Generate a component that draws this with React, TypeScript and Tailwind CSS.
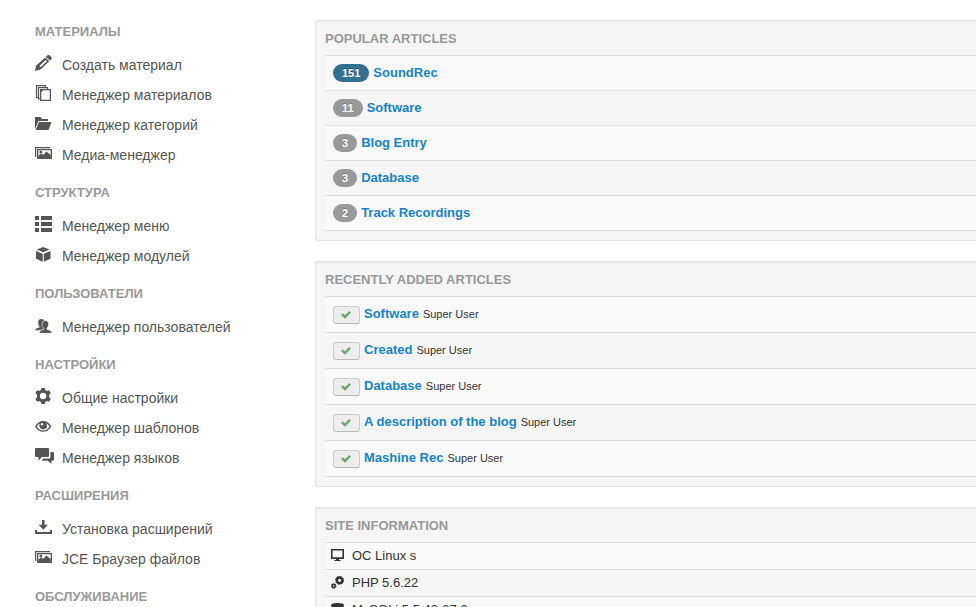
import type { ReactNode } from "react";

const icons: Record<string, ReactNode> = {
  pencil: (
    <>
      <path d="M12 .8 Q13.4 -.6 15.2 .8 Q17.6 2.8 16.2 4.4 L15 5.6 L10.9 1.9 Z" />
      <path fillRule="evenodd" d="M10.2 2.5 L14.3 6.2 L5.4 14.6 L0 16 L1 10.8 Z M10.6 5 L4.4 10.9 L5.7 12.1 L12 6.3 Z" />
    </>
  ),
  stack: (
    <>
      <g fill="none" stroke="currentColor" strokeWidth="1.2">
        <path d="M3 12.5 H1.5 V.6 H10.5 V2" />
        <path d="M5 14 H3.5 V2.6 H12.5 V4" />
      </g>
      <path fill="#fff" stroke="currentColor" strokeWidth="1.3" d="M8 4.6 H15.4 V15.4 H5.6 V7 Z" />
      <path d="M5 4 H9 L5 8 Z" />
    </>
  ),
  folder: (
    <>
      <path d="M0 14 V2 H5.5 L7 4 H13 V6 H3.5 Z" />
      <path d="M4 7 H16.5 L13.5 15 H.6 Z" />
    </>
  ),
  pictures: (
    <>
      <path d="M0 2 H15 V3.2 H1.2 V12 H0 Z" />
      <path fillRule="evenodd" d="M2 4 H17 V14 H2 Z M3.3 5.2 V12.8 H15.7 V5.2 Z" />
      <path d="M3.3 13 V10.6 L5.8 8.8 L8.3 9.8 L11.4 6.6 L15.8 10 V13 Z" />
      <circle cx="5.9" cy="7" r="1.5" />
    </>
  ),
  list: <path d="M0 0 H4 V4 H0 Z M6 0 H17 V4 H6 Z M0 6 H4 V10 H0 Z M6 6 H17 V10 H6 Z M0 12 H4 V16 H0 Z M6 12 H17 V16 H6 Z" />,
  cube: <path d="M8.2 1 L14.6 3.6 L8.2 6.2 L1.8 3.6 Z M1 5 L7.7 7.8 V15.8 L1 12.8 Z M15.5 5 L8.8 7.8 V15.8 L15.5 12.8 Z" />,
  users: (
    <>
      <path d="M0 13.2 Q.2 11.2 4.4 10.4 V9.5 Q3 8 3.2 5 Q3.4 2 6.4 2 Q9.4 2 9.6 5 Q9.6 7 8.6 9 L10 12 L5 13.2 Z" />
      <path stroke="#fff" strokeWidth=".6" d="M4.2 16.4 Q4.2 13.2 8.8 12.4 V11.3 Q6.8 9.8 6.9 7 Q7 3.6 10.3 3.6 Q13.6 3.6 13.7 7 Q13.7 9.8 12 11.3 V12.4 Q17 13.2 17 16.4 Z" />
    </>
  ),
  gear: (
    <path
      fillRule="evenodd"
      d="M6.4 0 H9.8 L10.3 2.1 L12 3 L14 2.2 L15.8 5.1 L14.2 6.7 V9.3 L15.8 10.9 L14 13.8 L12 13 L10.3 13.9 L9.8 16 H6.4 L5.8 13.9 L4.2 13 L2.1 13.8 L.4 10.9 L2 9.3 V6.7 L.4 5.1 L2.1 2.2 L4.2 3 L5.8 2.1 Z M8.1 4.8 A3.2 3.2 0 1 0 8.1 11.2 A3.2 3.2 0 1 0 8.1 4.8 Z"
    />
  ),
  eye: (
    <>
      <path fillRule="evenodd" d="M0 8.4 Q3.4 3 8.2 3 Q13 3 16.4 8.4 Q13 13.8 8.2 13.8 Q3.4 13.8 0 8.4 Z M1.8 8.4 Q4.4 12.4 8.2 12.4 Q12 12.4 14.6 8.4 Q12.8 5.8 10.8 4.9 H5.6 Q3.6 5.8 1.8 8.4 Z" />
      <circle cx="8.2" cy="7.6" r="3.8" />
      <circle cx="7" cy="6.2" r="1.2" fill="#fff" />
    </>
  ),
  comments: (
    <>
      <path d="M1 0 H13 Q14 0 14 1 V8 Q14 9 13 9 H7 L3.4 12.4 V9 H1 Q0 9 0 8 V1 Q0 0 1 0 Z" />
      <path d="M15.4 4 H17.8 Q19 4 19 5.2 V11.6 Q19 12.8 17.8 12.8 H16.4 V16 L12.8 12.8 H8.4 Q7 12.8 7 11.4 L8.2 10.6 H14 Q15.4 10.6 15.4 9.2 Z" />
    </>
  ),
  download: <path d="M7 1 H9.6 V5.8 H13 L8.3 10.8 L3.6 5.8 H7 Z M0 11 H2 V13 H15 V11 H17 V15 H0 Z" />,
};

const menu = [
  {
    title: "МАТЕРИАЛЫ",
    items: [
      { icon: "pencil", label: "Создать материал" },
      { icon: "stack", label: "Менеджер материалов" },
      { icon: "folder", label: "Менеджер категорий" },
      { icon: "pictures", label: "Медиа-менеджер" },
    ],
  },
  {
    title: "СТРУКТУРА",
    items: [
      { icon: "list", label: "Менеджер меню" },
      { icon: "cube", label: "Менеджер модулей" },
    ],
  },
  {
    title: "ПОЛЬЗОВАТЕЛИ",
    items: [{ icon: "users", label: "Менеджер пользователей" }],
  },
  {
    title: "НАСТРОЙКИ",
    items: [
      { icon: "gear", label: "Общие настройки" },
      { icon: "eye", label: "Менеджер шаблонов" },
      { icon: "comments", label: "Менеджер языков" },
    ],
  },
  {
    title: "РАСШИРЕНИЯ",
    items: [
      { icon: "download", label: "Установка расширений" },
      { icon: "pictures", label: "JCE Браузер файлов" },
    ],
  },
  { title: "ОБСЛУЖИВАНИЕ", items: [] },
];

const popular = [
  { hits: 151, title: "SoundRec", badge: "bg-[#31708f]" },
  { hits: 11, title: "Software", badge: "bg-[#999]" },
  { hits: 3, title: "Blog Entry", badge: "bg-[#999]" },
  { hits: 3, title: "Database", badge: "bg-[#999]" },
  { hits: 2, title: "Track Recordings", badge: "bg-[#999]" },
];

const recent = ["Software", "Created", "Database", "A description of the blog", "Mashine Rec"];

const siteInfo = [
  {
    label: "OC Linux s",
    icon: (
      <>
        <path fillRule="evenodd" d="M0 0 H13 V10 H0 Z M1.6 1.6 V8.2 H11.4 V1.6 Z" />
        <path d="M5 10 H8 V11 H9.6 V12 H3.4 V11 H5 Z" />
      </>
    ),
  },
  {
    label: "PHP 5.6.22",
    icon: (
      <g fill="none" stroke="currentColor">
        <circle cx="8.6" cy="4.3" r="2.8" strokeWidth="2.4" />
        <circle cx="8.6" cy="4.3" r="4.1" strokeWidth="1" strokeDasharray="1.6 1.6" />
        <circle cx="2.7" cy="10" r="1.6" strokeWidth="1.6" />
        <circle cx="2.7" cy="10" r="2.4" strokeWidth=".8" strokeDasharray="1 .9" />
      </g>
    ),
  },
  {
    label: "MySQLi 5.5.43-37.2",
    icon: (
      <>
        <path d="M0 2.4 Q0 0 6.5 0 Q13 0 13 2.4 Q13 5 6.5 5 Q0 5 0 2.4 Z" />
        <path d="M0 4.6 Q6.5 8 13 4.6 V7 Q6.5 10.4 0 7 Z M0 8.6 Q6.5 12 13 8.6 V11 Q6.5 14.4 0 11 Z" />
      </>
    ),
  },
];

function Panel({ title, children }: { title: string; children: ReactNode }) {
  return (
    <section className="rounded-l-[3px] border border-r-0 border-[#e3e3e3] bg-[#f5f5f5] pb-[9px] pl-[9px] shadow-[inset_0_1px_1px_rgba(0,0,0,0.05)]">
      <h2 className="h-[34px] text-[13px] font-bold leading-9 text-[#999]">{title}</h2>
      <ul className="border-b border-[#ddd]">{children}</ul>
    </section>
  );
}

export default function App() {
  return (
    <div className="flex h-screen overflow-hidden bg-white font-['Liberation_Sans',Arial,sans-serif] text-[13px] text-[#333]">
      <nav className="w-[315px] shrink-0 pl-[35px] pt-[9px]">
        {menu.map((group) => (
          <div key={group.title}>
            <h2 className="h-[41px] pt-[13px] text-[13px] font-bold leading-5 text-[#999]">{group.title}</h2>
            <ul>
              {group.items.map((item) => (
                <li key={item.label}>
                  <a href="#" className="flex h-[30px] items-start gap-2 text-sm leading-[30px] text-[#555]">
                    <svg viewBox="0 0 19 16" className="mt-[5px] h-4 w-[19px] shrink-0" fill="currentColor" aria-hidden="true">
                      {icons[item.icon]}
                    </svg>
                    {item.label}
                  </a>
                </li>
              ))}
            </ul>
          </div>
        ))}
      </nav>

      <main className="flex min-w-0 flex-1 flex-col gap-5 pt-5">
        <Panel title="POPULAR ARTICLES">
          {popular.map((row) => (
            <li key={row.title} className="flex h-[35px] items-center gap-1 border-t border-[#ddd] pl-2 odd:bg-[#f9f9f9]">
              <span className={`rounded-full px-[9px] text-[11px] font-bold leading-[18px] text-white [text-shadow:0_-1px_0_rgba(0,0,0,0.25)] ${row.badge}`}>
                {row.hits}
              </span>
              <a href="#" className="font-bold text-[#1583cb]">{row.title}</a>
            </li>
          ))}
        </Panel>

        <Panel title="RECENTLY ADDED ARTICLES">
          {recent.map((title) => (
            <li key={title} className="flex h-9 items-center gap-1 border-t border-[#ddd] pl-2 odd:bg-[#f9f9f9]">
              <button type="button" aria-label="Published" className="flex h-[18px] w-[27px] items-center rounded-[3px] border border-[#ccc] border-b-[#bbb] bg-[#ededed] pl-[7px]">
                <svg viewBox="0 0 10 8" className="h-2 w-2.5" aria-hidden="true">
                  <path d="M0 4 L1.8 2.2 L4 4.2 L8.2 0 L10 1.6 L4 7.8 Z" fill="#6fa571" />
                </svg>
              </button>
              <span className="flex items-baseline gap-1 pb-0.5">
                <a href="#" className="font-bold text-[#1583cb]">{title}</a>
                <small className="text-[11px]">Super User</small>
              </span>
            </li>
          ))}
        </Panel>

        <Panel title="SITE INFORMATION">
          {siteInfo.map((row) => (
            <li key={row.label} className="flex h-[27px] items-center gap-2 border-t border-[#ddd] pl-1.5 odd:bg-[#f9f9f9]">
              <svg viewBox="0 0 13 15" className="h-[15px] w-[13px] shrink-0" fill="currentColor" aria-hidden="true">
                {row.icon}
              </svg>
              {row.label}
            </li>
          ))}
        </Panel>
      </main>
    </div>
  );
}
